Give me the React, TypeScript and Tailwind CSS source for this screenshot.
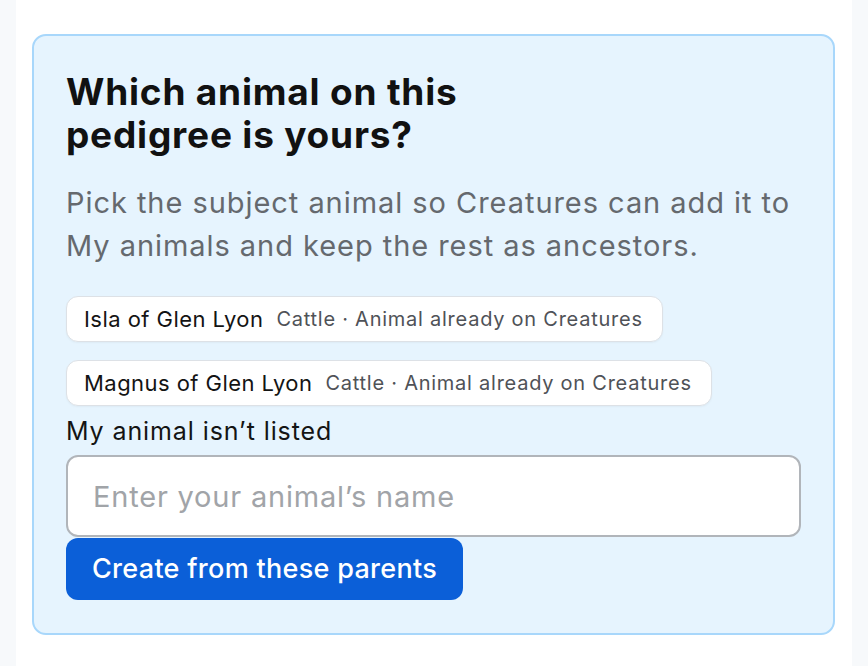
import React from "react";

const font = { fontFamily: "Inter, 'Noto Sans', sans-serif" };

function Chip({ name, meta }: { name: string; meta: string }) {
  return (
    <button
      type="button"
      className="flex items-center gap-[13px] self-start h-[46px] pl-[17px] pr-[19px] rounded-[12px] border border-[#dde1e6] bg-white shadow-[0_1px_2px_rgba(0,0,0,0.04)]"
    >
      <span className="text-[22px] text-[#141414] tracking-[0.45px]">{name}</span>
      <span className="text-[20px] text-[#4f5257] tracking-[0.75px]">{meta}</span>
    </button>
  );
}

export default function App() {
  return (
    <div className="min-h-[666px] w-full bg-[#f7f9fb] flex justify-start" style={font}>
      <div className="ml-[16px] w-[836px] min-h-[666px] bg-white pt-[34px] pl-[16px] pr-[17px]">
        <div className="rounded-[14px] border-2 border-[#a8d7fb] bg-[#e6f4fe] px-[32px] pt-[34px] pb-[33px] flex flex-col">
          <h1 className="text-[37px] leading-[43px] font-bold text-[#111111] tracking-[0.8px] max-w-[460px]">
            Which animal on this pedigree is yours?
          </h1>
          <p className="mt-[25px] text-[29px] leading-[43px] text-[#65696e] tracking-[0.95px]">
            Pick the subject animal so Creatures can add it to My animals and keep the rest as ancestors.
          </p>
          <div className="mt-[29px] flex flex-col gap-[18px]">
            <Chip name="Isla of Glen Lyon" meta="Cattle · Animal already on Creatures" />
            <Chip name="Magnus of Glen Lyon" meta="Cattle · Animal already on Creatures" />
          </div>
          <label className="mt-[9px] text-[25px] leading-[32px] text-[#141414] tracking-[0.9px]">
            My animal isn’t listed
          </label>
          <input
            className="mt-[8px] h-[82px] w-full rounded-[12px] border-2 border-[#b1b5ba] bg-white px-[25px] text-[29px] text-[#141414] placeholder:text-[#a1a4a8] outline-none tracking-[0.8px]"
            placeholder="Enter your animal’s name"
          />
          <button
            type="button"
            className="mt-[1px] self-start h-[62px] px-[26px] rounded-[12px] bg-[#0b5fd8] text-white text-[27px] font-medium tracking-[0.3px]"
          >
            Create from these parents
          </button>
        </div>
      </div>
    </div>
  );
}
